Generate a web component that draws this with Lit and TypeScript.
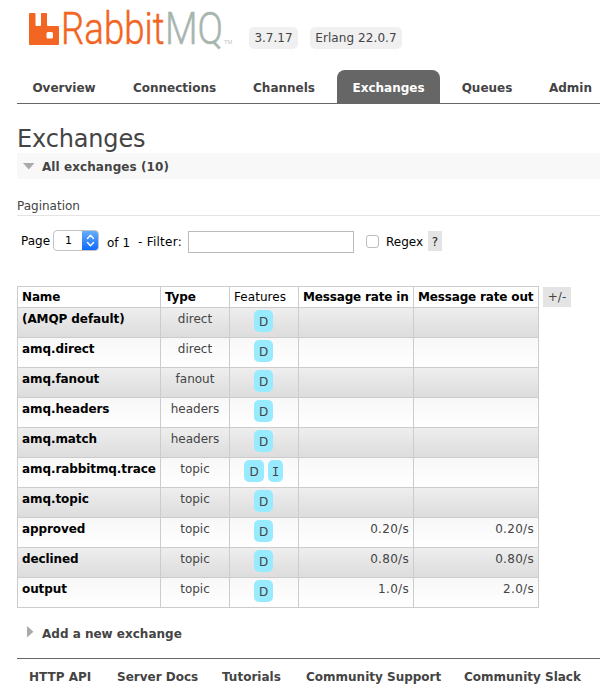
import { LitElement, html, css, svg } from "lit";
import { customElement } from "lit/decorators.js";
import { classMap } from "lit/directives/class-map.js";
import { styleMap } from "lit/directives/style-map.js";

interface Exchange {
  name: string;
  type: string;
  features: string[];
  rateIn?: string;
  rateOut?: string;
}

const EXCHANGES: Exchange[] = [
  { name: "(AMQP default)", type: "direct", features: ["D"] },
  { name: "amq.direct", type: "direct", features: ["D"] },
  { name: "amq.fanout", type: "fanout", features: ["D"] },
  { name: "amq.headers", type: "headers", features: ["D"] },
  { name: "amq.match", type: "headers", features: ["D"] },
  { name: "amq.rabbitmq.trace", type: "topic", features: ["D", "I"] },
  { name: "amq.topic", type: "topic", features: ["D"] },
  { name: "approved", type: "topic", features: ["D"], rateIn: "0.20/s", rateOut: "0.20/s" },
  { name: "declined", type: "topic", features: ["D"], rateIn: "0.80/s", rateOut: "0.80/s" },
  { name: "output", type: "topic", features: ["D"], rateIn: "1.0/s", rateOut: "2.0/s" },
];

const TABS = [
  { label: "Overview", width: 94 },
  { label: "Connections", width: 113 },
  { label: "Channels", width: 92 },
  { label: "Exchanges", width: 103 },
  { label: "Queues", width: 80 },
  { label: "Admin", width: 73 },
];
const LINKS = [
  { label: "HTTP API", width: 64 },
  { label: "Server Docs", width: 81 },
  { label: "Tutorials", width: 60 },
  { label: "Community Support", width: 134 },
  { label: "Community Slack", width: 117 },
];

@customElement("rabbit-logo")
class RabbitLogo extends LitElement {
  static styles = css`
    :host { display: block; width: 204px; height: 40px; }
    svg { display: block; overflow: visible; }
    .word { font-family: Roboto, "Liberation Sans", sans-serif; font-weight: 300; font-size: 45px; stroke-width: 0.5px; }
    .orange { fill: #f26522; }
    .grey { fill: #a7b5af; }
    .word.orange { stroke: #f26522; }
    .word.grey { stroke: #a7b5af; }
    .tm { font: 6px "Liberation Sans", sans-serif; fill: #bbc4c0; }
  `;
  render() {
    return html`<svg width="204" height="40" viewBox="0 0 204 40">
      ${svg`
        <path class="orange" fill-rule="evenodd" d="M1 5h4.500a1 1 0 0 1 1 1v11a1 1 0 0 0 1 1h3.500a1 1 0 0 0 1-1V6a1 1 0 0 1 1-1h4a1 1 0 0 1 1 1v11a1 1 0 0 0 1 1h10a1 1 0 0 1 1 1v17a1 1 0 0 1-1 1H1a1 1 0 0 1-1-1V6a1 1 0 0 1 1-1zM19 24a1.500 1.500 0 0 0-1.500 1.500v3.500a1.500 1.500 0 0 0 1.500 1.500h3.500a1.500 1.500 0 0 0 1.500-1.500v-3.500a1.500 1.500 0 0 0-1.500-1.500z"/>
        <text class="word orange" x="32" y="36" textLength="103.500" lengthAdjust="spacingAndGlyphs">Rabbit</text>
        <text class="word grey" x="136" y="36" textLength="58" lengthAdjust="spacingAndGlyphs">MQ</text>
        <text class="tm" x="195" y="36" textLength="8" lengthAdjust="spacingAndGlyphs">TM</text>`}
    </svg>`;
  }
}

@customElement("app-root")
class AppRoot extends LitElement {
  static styles = css`
    :host {
      display: block; box-sizing: border-box; width: 600px; height: 700px; overflow: hidden;
      padding-left: 17px; background: #fff; color: #444;
      font: 12px/16px "DejaVu Sans", Verdana, sans-serif;
    }
    * { box-sizing: border-box; }
    .header { display: flex; height: 70px; padding: 8px 0 0 12px; }
    .versions { display: flex; gap: 12px; padding: 19px 0 0 16px; }
    .version {
      height: 22px; width: 49px; border-radius: 5px; background: #f0f0f0;
      line-height: 23px; text-align: center; white-space: nowrap;
    }
    .version.wide { width: 92px; letter-spacing: 0.08px; }
    .tabs { display: flex; gap: 7px; height: 34px; border-bottom: 1px solid #666; white-space: nowrap; }
    .tab { flex: none; line-height: 36px; font-weight: bold; text-align: center; }
    .tab.active { background: #666; color: #fff; border-radius: 8px 8px 0 0; }
    h1 { margin: 20px 0 0; height: 29px; font-size: 24px; line-height: 30px; font-weight: normal; letter-spacing: -0.15px; }
    .section { display: flex; align-items: center; height: 26px; background: #f8f8f8; font-weight: bold; }
    .title { padding-top: 2px; letter-spacing: 0.08px; }
    .marker { flex: none; width: 25px; padding-left: 6px; }
    .marker svg { display: block; }
    h3 {
      margin: 19px 0 0; height: 18px; border-bottom: 1px solid #e4e4e4;
      font-size: 12px; line-height: 17px; font-weight: normal;
    }
    .filters { display: flex; height: 70px; padding: 14px 0 0 4px; color: #000; white-space: nowrap; }
    .filters > * { flex: none; }
    .label { line-height: 22px; }
    .page { width: 32px; }
    .select {
      display: flex; width: 46px; height: 21px; border: 1px solid #c4c4c4; border-radius: 4px;
      overflow: hidden; font-size: 11px; line-height: 20px;
    }
    .value { flex: 1; text-align: center; }
    .arrows { width: 17px; margin: -1px; height: 21px; background: linear-gradient(#6bb0fa, #0a67fb); }
    .arrows svg { display: block; }
    .total { width: 31px; margin-left: 8px; line-height: 26px; }
    .filter { width: 50px; line-height: 24px; letter-spacing: 0.25px; }
    .input { width: 166px; height: 22px; margin-top: 1px; border: 1px solid #bbb; }
    .check { width: 13px; height: 13px; margin: 5px 7px 0 12px; border: 1px solid #bcbcbc; border-radius: 3px; }
    .regex { width: 42px; line-height: 24px; }
    .help { width: 14px; height: 20px; margin-top: 1px; background: #e4e4e4; line-height: 22px; text-align: center; color: #222; }
    .listing { display: flex; gap: 4px; }
    .table { border: solid #ccc; border-width: 1px 0 0 1px; }
    .row { display: grid; grid-template: 100% / 143px 69px 69px 115px 125px; height: 30px; background: linear-gradient(#f8f8f8, #fff); }
    .row.odd { background: linear-gradient(#eee, #dcdcdc); }
    .row.head { height: 21px; background: #fff; color: #000; }
    .cell { border: solid #ccc; border-width: 0 1px 1px 0; padding: 0 4px; line-height: 22px; white-space: nowrap; }
    .head .cell { font-weight: bold; line-height: 20px; letter-spacing: -0.16px; }
    .head .cell.plain { font-weight: normal; letter-spacing: 0.05px; }
    .name { font-weight: bold; color: #000; letter-spacing: -0.09px; }
    .center { text-align: center; }
    .right { text-align: right; letter-spacing: 0.3px; }
    .features { display: flex; justify-content: center; gap: 4px; padding: 2px 5px 0 4px; }
    .feature { height: 22px; width: 19px; border-radius: 5px; background: #98ebff; line-height: 24px; text-align: center; }
    .feature.narrow { width: 15px; font-family: "DejaVu Sans Mono", monospace; }
    .feature.wide { width: 20px; }
    .toggle { width: 28px; height: 20px; margin-top: 1px; background: #e4e4e4; line-height: 21px; text-align: center; }
    .add { display: flex; height: 50px; padding-top: 18px; font-weight: bold; }
    .add .marker { padding-left: 10px; }
    .footer { display: flex; gap: 24px; padding: 10px 0 0 12px; border-top: 1px solid #666; font-weight: bold; white-space: nowrap; }
    .link { flex: none; }
  `;

  render() {
    return html`
      <div class="header">
        <rabbit-logo></rabbit-logo>
        <div class="versions"><span class="version">3.7.17</span><span class="version wide">Erlang 22.0.7</span></div>
      </div>
      <nav class="tabs">
        ${TABS.map((t) => html`<span class=${classMap({ tab: true, active: t.label === "Exchanges" })}
          style=${styleMap({ width: `${t.width}px` })}>${t.label}</span>`)}
      </nav>
      <h1>Exchanges</h1>
      <div class="section">
        <span class="marker"><svg width="12" height="7"><path d="M0 0h11.500L5.750 6.500z" fill="#aaa" /></svg></span>
        <span class="title">All exchanges (10)</span>
      </div>
      <h3>Pagination</h3>
      <div class="filters">
        <span class="label page">Page</span>
        <div class="select">
          <span class="value">1</span>
          <span class="arrows"><svg width="17" height="21" fill="none" stroke="#fff" stroke-width="1.400" stroke-linecap="round" stroke-linejoin="round">
            <path d="M5.500 8.500l3-3.200 3 3.200M5.500 12.500l3 3.200 3-3.200" /></svg></span>
        </div>
        <span class="total">of 1</span>
        <span class="filter">- Filter:</span>
        <div class="input"></div>
        <div class="check"></div>
        <span class="regex">Regex</span>
        <span class="help">?</span>
      </div>
      <div class="listing">
        <div class="table">
          <div class="row head">
            <span class="cell">Name</span><span class="cell">Type</span><span class="cell plain">Features</span>
            <span class="cell">Message rate in</span><span class="cell">Message rate out</span>
          </div>
          ${EXCHANGES.map((e, i) => html`
            <div class=${classMap({ row: true, odd: i % 2 === 0 })}>
              <span class="cell name">${e.name}</span>
              <span class="cell center">${e.type}</span>
              <span class="cell features">${e.features.map((f) => html`<span
                class=${classMap({ feature: true, narrow: f === "I", wide: f === "D" && e.features.length > 1 })}>${f}</span>`)}</span>
              <span class="cell right">${e.rateIn ?? ""}</span>
              <span class="cell right">${e.rateOut ?? ""}</span>
            </div>`)}
        </div>
        <span class="toggle">+/-</span>
      </div>
      <div class="add">
        <span class="marker"><svg width="7" height="12"><path d="M0 0v11.500L6.500 5.750z" fill="#aaa" /></svg></span>
        <span>Add a new exchange</span>
      </div>
      <footer class="footer">${LINKS.map((l) => html`<span class="link"
        style=${styleMap({ width: `${l.width}px` })}>${l.label}</span>`)}</footer>
    `;
  }
}
